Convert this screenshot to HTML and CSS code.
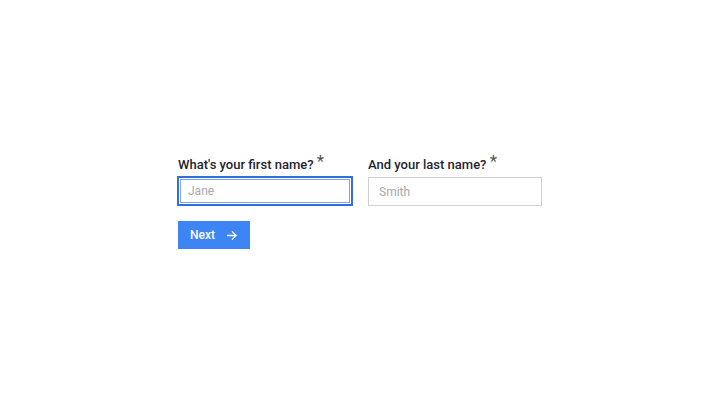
FILE: index.html
```html
<!DOCTYPE html>
<html lang="en">
<head>
    <meta charset="UTF-8">
    <meta name="viewport" content="width=device-width, initial-scale=1.0">
    <title>Your name</title>
    <link rel="stylesheet" href="styles.css">
</head>
<body>
    <div id="content">
        <form class="name-form" action="#" method="post">
            <div class="row">
                <div class="input-group">
                    <label for="firstName">What's your first name? <span class="req">*</span></label>
                    <input type="text" id="firstName" class="focused" placeholder="Jane">
                </div>
                <div class="input-group">
                    <label for="lastName">And your last name? <span class="req">*</span></label>
                    <input type="text" id="lastName" placeholder="Smith">
                </div>
            </div>
            <button type="submit">
                <span>Next</span>
                <svg width="11" height="11" viewBox="0 0 12 12" fill="none" stroke="white" stroke-width="1.4">
                    <path d="M1 6h10M6.5 1.5L11 6l-4.5 4.5"/>
                </svg>
            </button>
        </form>
    </div>
</body>
</html>
```

FILE: styles.css
```css
body {
    margin: 0;
    padding: 0;
    font-family: 'Roboto', sans-serif;
    background: #ffffff;
    height: 100vh;
    display: flex;
    flex-direction: column;
}

#content {
    flex: 1;
    display: flex;
    justify-content: center;
    align-items: center;
}

.name-form {
    display: flex;
    flex-direction: column;
    align-items: flex-start;
    margin-top: -2px;
}

.row {
    display: flex;
    gap: 15px;
}

.input-group {
    display: flex;
    flex-direction: column;
}

.input-group label {
    font-size: 13px;
    font-weight: 500;
    color: #1f2430;
    margin-bottom: 3px;
    line-height: 18px;
}

.req {
    font-size: 17px;
    font-weight: 400;
    color: #555;
    position: relative;
    top: -2px;
}

.input-group input {
    width: 174px;
    height: 29px;
    padding: 0 10px;
    border: 1px solid #d0d0d0;
    box-sizing: border-box;
    font-family: 'Roboto', sans-serif;
    font-size: 12px;
    color: #333;
    outline: none;
}

.input-group input::placeholder {
    color: #a8a8a8;
}

.input-group input.focused {
    border: 2px solid #2f6fde;
    box-shadow: inset 0 0 0 1px #ffffff, inset 0 0 0 2px #7aa6ef;
    padding: 0 9px;
    width: 176px;
    height: 30px;
    margin-left: -1px;
    margin-top: -1px;
}

button {
    margin-top: 15px;
    display: flex;
    align-items: center;
    gap: 11px;
    height: 28px;
    padding: 0 13px 0 12px;
    border: none;
    background-color: #3d84f5;
    color: white;
    font-family: 'Roboto', sans-serif;
    font-size: 12px;
    font-weight: 500;
    cursor: pointer;
}
```
